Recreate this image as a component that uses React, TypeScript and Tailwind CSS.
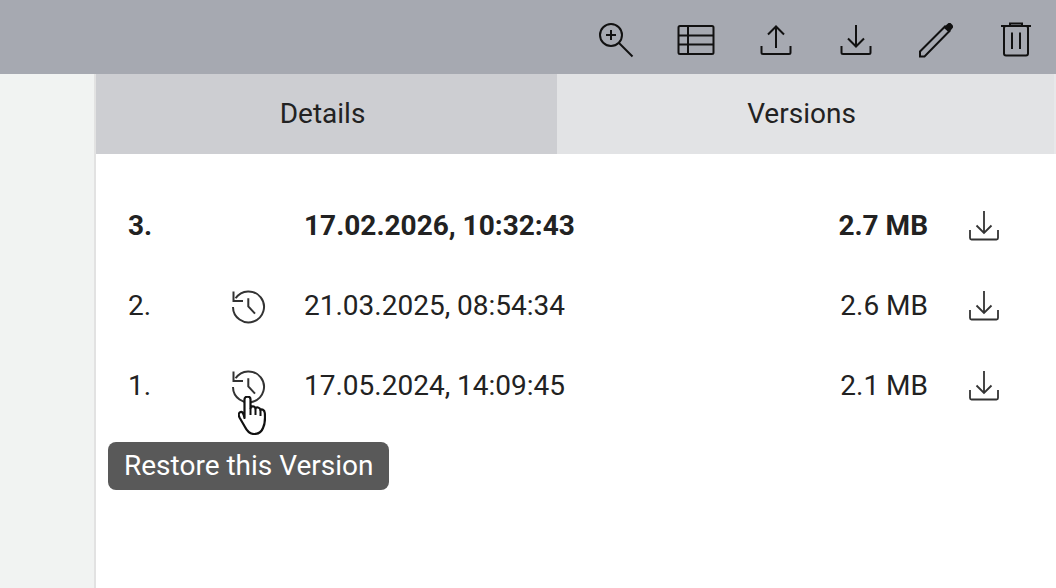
const actions = ["zoom", "table", "upload", "download", "edit", "trash"] as const;

const versions = [
  { no: "3.", date: "17.02.2026, 10:32:43", size: "2.7 MB", current: true },
  { no: "2.", date: "21.03.2025, 08:54:34", size: "2.6 MB", current: false },
  { no: "1.", date: "17.05.2024, 14:09:45", size: "2.1 MB", current: false },
];

function ToolbarIcon({ name }: { name: (typeof actions)[number] }) {
  return (
    <svg viewBox="0 0 40 40" className="size-10 text-[#111]" fill="none" stroke="currentColor" strokeWidth="2">
      {name === "zoom" && (
        <>
          <circle cx="15" cy="15" r="11" />
          <path d="M15 10v10M10 15h10" />
          <path d="M23 23 36.500 36.500" />
        </>
      )}
      {name === "table" && (
        <>
          <rect x="2.500" y="6" width="35" height="28" rx="1.500" />
          <path d="M2.500 15.500h35M2.500 24.500h35M12 6v28" />
        </>
      )}
      {name === "upload" && (
        <path d="M5.500 26v6.500a1.500 1.500 0 0 0 1.500 1.500h26a1.500 1.500 0 0 0 1.500-1.500V26M20 28V7M12 14.500 20 6.500l8 8" />
      )}
      {name === "download" && (
        <path d="M5.500 26v6.500a1.500 1.500 0 0 0 1.500 1.500h26a1.500 1.500 0 0 0 1.500-1.500V26M20 5V26M12 18.500 20 26.500l8-8" />
      )}
      {name === "edit" && (
        <>
          <path d="M4 31.500 29 6.500l4.500 4.500-25 25.500H4z" />
          <path d="M27.500 7.500l5-4.500h2l2.500 2.500v2l-4 5z" fill="currentColor" stroke="none" />
        </>
      )}
      {name === "trash" && (
        <>
          <path d="M5 6h30" />
          <path d="M14 5V3.500h12V5" />
          <rect x="8" y="6" width="24" height="29.500" rx="2" />
          <path d="M16 12.500v16.500M24 12.500v16.500" />
        </>
      )}
    </svg>
  );
}

function RowDownload() {
  return (
    <svg viewBox="0 1 32 32" className="size-8 text-[#333]" fill="none" stroke="currentColor" strokeWidth="1.800">
      <path d="M2 21v8a1.500 1.500 0 0 0 1.500 1.500h25a1.500 1.500 0 0 0 1.500-1.500v-8M16 2v22M8.500 16.500l7.500 7.500 7.500-7.500" />
    </svg>
  );
}

function HistoryIcon() {
  return (
    <svg viewBox="0 0 36 36" className="size-9 text-[#333]" fill="none" stroke="currentColor" strokeWidth="2">
      <path d="M5.600 10.300A15.500 15.500 0 1 1 3 19" />
      <path d="M3.500 3.500V13H13" />
      <path d="M18.300 10.300V18.300L25 25.700" />
    </svg>
  );
}

function HandCursor() {
  return (
    <svg viewBox="0 0 28 39" className="absolute left-2 top-7 h-[39px] w-7">
      <path
        d="M6.500 22V3.200C6.500-.2 12.500-.2 12.500 3.200V12C13 9.800 17 9.800 17.500 12.500 18 10.800 22 11 22.500 14 23.500 12.800 26.500 13.500 26.800 17 27.300 23 27 28 25 32 23.500 36 20 38 16 38 11 38 9 35 7 31L1.500 21.500C0 18.500 1 16.500 2.500 16 4 15.500 5.500 16.500 6.500 22Z"
        fill="#fff"
        stroke="#111"
        strokeWidth="2.200"
        strokeLinejoin="round"
      />
      <path d="M12.500 12v7M17.500 12.500V19M22.500 14v6" stroke="#111" strokeWidth="2" fill="none" />
    </svg>
  );
}

export default function App() {
  return (
    <div className="flex h-[588px] w-[1056px] flex-col overflow-hidden bg-white font-['Roboto',sans-serif] text-[28px] text-[#222]">
      <header className="flex h-[74px] items-center justify-end gap-10 bg-[#a6a9b1] pt-[6px] pr-5">
        {actions.map((name) => (
          <ToolbarIcon key={name} name={name} />
        ))}
      </header>

      <div className="flex flex-1">
        <aside className="w-[96px] border-r-2 border-[#e2e2e2] bg-[#f1f3f2]" />

        <main className="flex-1">
          <div className="flex h-20">
            <div className="flex w-[461px] items-center justify-center bg-[#cdced2] pr-2">Details</div>
            <div className="flex flex-1 items-center justify-center border-r-2 border-[#e8e8ea] bg-[#e2e3e5] pr-2">
              Versions
            </div>
          </div>

          <div className="relative pt-8">
            {versions.map((v) => (
              <div key={v.no} className={`flex h-20 items-center pl-8 pr-[56px] ${v.current ? "font-bold" : ""}`}>
                <span className="w-[102px]">{v.no}</span>
                <span className="relative mr-[38px] size-9">
                  {!v.current && <HistoryIcon />}
                  {v.no === "1." && <HandCursor />}
                </span>
                <span className="whitespace-nowrap">{v.date}</span>
                <span className="ml-auto mr-10">{v.size}</span>
                <RowDownload />
              </div>
            ))}

            <div className="absolute left-3 top-[288px] rounded-lg bg-[#595959] px-4 py-[6px] leading-9 whitespace-nowrap text-white">
              Restore this Version
            </div>
          </div>
        </main>
      </div>
    </div>
  );
}
